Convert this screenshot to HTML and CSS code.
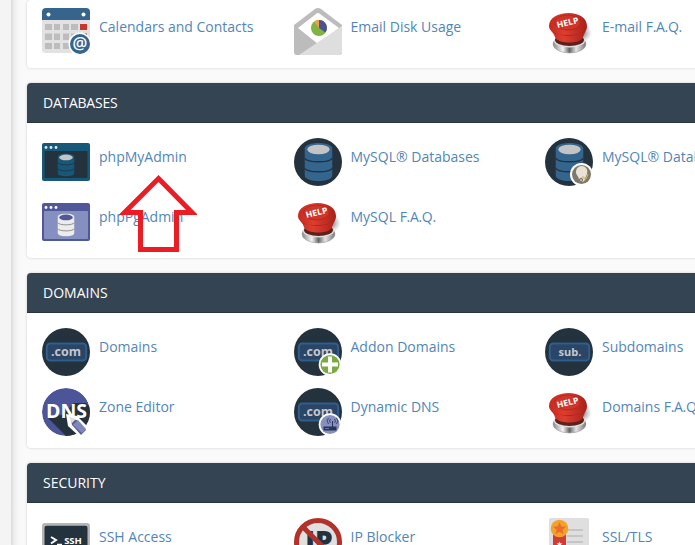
FILE: index.html
```html
<!DOCTYPE html>
<html lang="en">
<head>
<meta charset="utf-8">
<title>Control panel</title>
<link rel="stylesheet" href="styles.css">
</head>
<body>
<svg class="defs" aria-hidden="true">
  <defs>
    <linearGradient id="red" x1="0" x2="1"><stop offset="0" stop-color="#c52a1e"/><stop offset=".4" stop-color="#dd3e30"/><stop offset="1" stop-color="#a9201a"/></linearGradient>
    <linearGradient id="metal" x1="0" x2="1"><stop offset="0" stop-color="#888"/><stop offset=".3" stop-color="#f4f4f4"/><stop offset=".5" stop-color="#666"/><stop offset=".7" stop-color="#e5e5e5"/><stop offset="1" stop-color="#777"/></linearGradient>
    <radialGradient id="shade"><stop offset=".4" stop-color="#777" stop-opacity=".7"/><stop offset="1" stop-color="#aaa" stop-opacity="0"/></radialGradient>
    <clipPath id="disc"><circle cx="24" cy="24" r="24"/></clipPath>
    <symbol id="help" viewBox="0 0 48 48">
      <ellipse cx="35" cy="25" rx="12" ry="10" fill="url(#shade)"/>
      <ellipse cx="24.500" cy="36" rx="16.500" ry="9" fill="url(#metal)" stroke="#999" stroke-width=".6"/>
      <ellipse cx="24.500" cy="33" rx="15.500" ry="6.500" fill="#dedede"/>
      <ellipse cx="24.500" cy="32" rx="14.500" ry="6" fill="#5b211c"/>
      <path d="M4 18C4 10 13 5 23.500 5S42 10 42 18C42 22.500 39.500 24 38.500 28C37.500 32.500 32 34.500 24.500 34.500S10.500 32.500 9.500 28C8.500 24 4 22.500 4 18Z" fill="url(#red)"/>
      <path d="M5 21C9 29.500 37 30.500 41 21C38 25.500 34 27 23 27S8 26 5 21Z" fill="#a92219"/>
      <ellipse cx="22.500" cy="14.500" rx="12.800" ry="7.500" fill="#cf3529" stroke="#b5281f"/>
      <text x="22.500" y="17.500" class="t-help" textLength="22" lengthAdjust="spacingAndGlyphs" transform="rotate(-13 22.500 14)">HELP</text>
    </symbol>
    <symbol id="db" viewBox="0 0 28 38">
      <path d="M0 6C0 -2 28 -2 28 6V32C28 40 0 40 0 32Z" fill="currentColor"/>
      <path d="M0 15C3 20 25 20 28 15M0 25C3 30 25 30 28 25" fill="none" stroke="var(--line)" stroke-width="1.300"/>
      <ellipse cx="14" cy="6.500" rx="11.200" ry="4.800" fill="var(--top)"/>
    </symbol>
    <symbol id="mysql" viewBox="0 0 48 48">
      <circle cx="24" cy="24" r="24" fill="#24323e"/>
      <use href="#db" x="10.500" y="5" width="28" height="38" class="db-blue"/>
    </symbol>
    <symbol id="plate" viewBox="0 0 48 48">
      <circle cx="24" cy="24" r="24" fill="#24323e"/>
      <rect x="4.800" y="15.500" width="39.400" height="17" rx="3.500" fill="#2b4566" stroke="#2f5f8c" stroke-width="2"/>
    </symbol>
  </defs>
</svg>
<div class="layout">
  <aside class="rail"></aside>
  <main class="content">
    <section class="panel panel-cut">
      <div class="items">
        <a class="item"><svg class="icon" viewBox="0 0 48 48">
          <path d="M0 10H48V41a4 4 0 0 1-4 4H4a4 4 0 0 1-4-4Z" fill="#e2e2e2"/>
          <path d="M0 12V4a4 4 0 0 1 4-4H44a4 4 0 0 1 4 4V12Z" fill="#36648d"/>
          <circle cx="6.500" cy="6.500" r="2" fill="#fff"/><circle cx="41.500" cy="6.500" r="2" fill="#fff"/>
          <path d="M3 16h7v6H3zM12 16h6v6h-6zM21 16h6v6h-6zM29 16h7v6h-7zM3 25.500h7v6.500H3zM12 25.500h6v6.500h-6zM21 25.500h6v6.500h-6zM29 25.500h7v6.500h-7zM3 35h7v6H3zM12 35h6v6h-6zM21 35h6v6h-6z" fill="#bdbdbd"/>
          <path d="M38 16h7v6h-7zM38 25.500h7v6h-7z" fill="#c7372d"/>
          <circle cx="38" cy="36" r="11.500" fill="#fff"/><circle cx="38" cy="36" r="10" fill="#36648d"/>
          <text x="38" y="40.500" class="t-at">@</text></svg><span>Calendars and Contacts</span></a>
        <a class="item"><svg class="icon" viewBox="0 0 48 48">
          <path d="M0 17L21 1Q24-1 27 1L48 17V44a3 3 0 0 1-3 3H3a3 3 0 0 1-3-3Z" fill="#bcbcbc"/>
          <path d="M4 20L22 6Q24 4 26 6L45 20L24 36Z" fill="#fff"/>
          <path d="M48 18V44a3 3 0 0 1-3 3H5Z" fill="#dedede"/>
          <circle cx="25" cy="20" r="8" fill="#80b341"/><path d="M25 20V12a8 8 0 0 1 6.500 12.500Z" fill="#4e5292"/><path d="M25 20L20 13.800A8 8 0 0 1 25 12Z" fill="#eba04a"/></svg><span>Email Disk Usage</span></a>
        <a class="item"><svg class="icon"><use href="#help"/></svg><span>E-mail <b class="tight">F.A.Q.</b></span></a>
      </div>
    </section>

    <section class="panel">
      <h2 class="panel-head"><span class="narrow">DATABASES</span></h2>
      <div class="items">
        <a class="item"><svg class="icon" viewBox="0 0 48 48">
          <rect y="5" width="48" height="38" rx="2" fill="#175878"/><rect x="2.500" y="13" width="43" height="27" rx="1" fill="#24323e"/>
          <circle cx="4" cy="9.500" r="1.400" fill="#dceaf0"/><circle cx="9" cy="9.500" r="1.400" fill="#dceaf0"/><circle cx="14" cy="9.500" r="1.400" fill="#dceaf0"/>
          <use href="#db" x="15.500" y="15.500" width="17" height="23" class="db-teal"/></svg><span>phpMyAdmin</span></a>
        <a class="item"><svg class="icon"><use href="#mysql"/></svg><span>MySQL® Databases</span></a>
        <a class="item"><svg class="icon" viewBox="0 0 48 48"><use href="#mysql"/>
          <circle cx="36.500" cy="36.500" r="11.500" fill="#fff"/><circle cx="36.500" cy="36.500" r="9.500" fill="#80786a"/>
          <path d="M31 35a5.800 5.800 0 1 1 11 1c-1 3-2 3-2 6-2 3-6 2-6 0 0-3-2-4-3-7" fill="#e9e3d7"/><path d="M34 41h3v-2h2v2h2l2-5" fill="none" stroke="#d0b775"/><circle cx="36" cy="42" r="1.500" fill="none" stroke="#6f6759"/></svg><span>MySQL® Database Wizard</span></a>
        <a class="item"><svg class="icon" viewBox="0 0 48 48">
          <rect y="5" width="48" height="38" rx="2" fill="#50589a"/><rect x="2" y="13" width="44" height="28" rx="1" fill="#8590c0"/>
          <circle cx="4" cy="9.500" r="1.400" fill="#fff"/><circle cx="9" cy="9.500" r="1.400" fill="#fff"/><circle cx="14" cy="9.500" r="1.400" fill="#fff"/>
          <use href="#db" x="15.500" y="15.500" width="17" height="23" class="db-white"/></svg><span>phpPgAdmin</span>
          <svg class="pointer" viewBox="0 0 78 78"><path d="M39.500 4.500L73 38.500H57.500V75.500H21.500V38.500H5.500Z" fill="none" stroke="#ec1c24" stroke-width="5"/></svg></a>
        <a class="item"><svg class="icon"><use href="#help"/></svg><span>MySQL <b class="tight">F.A.Q.</b></span></a>
      </div>
    </section>

    <section class="panel">
      <h2 class="panel-head">DOMAINS</h2>
      <div class="items">
        <a class="item"><svg class="icon" viewBox="0 0 48 48"><use href="#plate"/><text x="24" y="28" class="t-com">.com</text></svg><span>Domains</span></a>
        <a class="item"><svg class="icon" viewBox="0 0 48 48"><use href="#plate"/><text x="24" y="28" class="t-com">.com</text>
          <circle cx="36" cy="36.500" r="11.300" fill="#fff"/><circle cx="36" cy="36.500" r="9.600" fill="#79aa43"/><path d="M36 28.500v16M28 36.500h16" stroke="#fff" stroke-width="4"/></svg><span>Addon Domains</span></a>
        <a class="item"><svg class="icon" viewBox="0 0 48 48"><use href="#plate"/><text x="25" y="28" class="t-sub">sub.</text></svg><span>Subdomains</span></a>
        <a class="item"><svg class="icon" viewBox="0 0 48 48"><g clip-path="url(#disc)"><circle cx="24" cy="24" r="24" fill="#4c5598"/><path d="M5 29L24 48H48V19L44 15L32 15L20 27Z" fill="#24323e"/></g>
          <text x="24.500" y="29.500" class="t-dns">DNS</text>
          <path d="M24 26L35 28L48 41L41 48H37L26 38Z" fill="#fff"/><path d="M29 31L35 32L44 42L39 47L30 37Z" fill="#596098"/><path d="M31 37L36 32L44 41L40 45Z" fill="#8087bb"/><path d="M27 29L34 31L30 35Z" fill="#ddd"/></svg><span>Zone Editor</span></a>
        <a class="item"><svg class="icon" viewBox="0 0 48 48"><use href="#plate"/><text x="24" y="28" class="t-com">.com</text>
          <circle cx="36" cy="36.500" r="11.300" fill="#fff"/><circle cx="36" cy="36.500" r="9.600" fill="#8890bf"/>
          <path d="M29.500 38.500h13v4h-13zM38 33h1v6h-1z" fill="#24345a"/><path d="M36.500 35q-2-2 0-4M34.500 36q-3-3 0-6M40.500 35q2-2 0-4M42.500 36q3-3 0-6" fill="none" stroke="#24345a" stroke-width=".8"/><path d="M31.500 40.500h1m1 0h1" stroke="#b7bddd"/></svg><span>Dynamic DNS</span></a>
        <a class="item"><svg class="icon"><use href="#help"/></svg><span>Domains <b class="tight">F.A.Q.</b></span></a>
      </div>
    </section>

    <section class="panel">
      <h2 class="panel-head">SECURITY</h2>
      <div class="items">
        <a class="item"><svg class="icon" viewBox="0 0 48 48"><rect y="5" width="48" height="38" rx="3" fill="#b5b5b5"/><rect x="2.500" y="7.800" width="43" height="33" rx="2" fill="#24323e"/>
          <path d="M9 19L14 22L9 25.500" fill="none" stroke="#fff" stroke-width="2"/><path d="M15 26.500H20" stroke="#fff" stroke-width="1.500"/><text x="31" y="25.500" class="t-ssh">SSH</text></svg><span>SSH Access</span></a>
        <a class="item"><svg class="icon" viewBox="0 0 48 48"><circle cx="24" cy="24" r="21.500" fill="#e0e0e0"/><text x="25" y="33" class="t-ip">IP</text><circle cx="24" cy="24" r="21.500" fill="none" stroke="#b2322b" stroke-width="5"/><path d="M9 9L39 39" stroke="#b2322b" stroke-width="5"/></svg><span>IP Blocker</span></a>
        <a class="item"><svg class="icon" viewBox="0 0 48 48"><rect x="4" width="40" height="48" rx="1.500" fill="#dfdfdf"/><path d="M19 12H38M22 18H38M22 24H38" stroke="#bdbdbd" stroke-width="1.600"/>
          <path d="M8 15H21V34L14.500 29L8 34Z" fill="#d33b36"/><circle cx="14.500" cy="10.500" r="8.800" fill="#f2a32d"/><path d="M14.500 4L16.300 8.300L21 8.700L17.400 11.700L18.500 16.200L14.500 13.700L10.500 16.200L11.600 11.700L8 8.700L12.700 8.300Z" fill="#ee6c27"/><path d="M14.500 23.500l.8 1.700 2 .2-1.500 1.300.4 2-1.700-1-1.700 1 .4-2-1.500-1.300 2-.2z" fill="#fff"/></svg><span>SSL/TLS</span></a>
      </div>
    </section>
  </main>
</div>
</body>
</html>
```
FILE: styles.css
```css
* { box-sizing: border-box; }
body { margin: 0; height: 545px; overflow: hidden; background: #fafafa; font: 14px/20px "Open Sans", sans-serif; }
.defs { position: absolute; width: 0; height: 0; }
.layout { display: flex; height: 545px; overflow: hidden; }
.rail { flex: 0 0 11px; background: #f4f4f4; }
.content { flex: none; width: 798px; padding-left: 16px; background: linear-gradient(90deg, #dadada, #ededed 3px, #f7f7f7 7px, #fafafa 12px); }
.panel { margin-bottom: 15px; background: #fff; border-radius: 4px; box-shadow: 0 0 2px 1px #e4e4e4; }
.panel-head { height: 40px; margin: 0; padding: 10px 16px; border-bottom: 1px solid #28353f; border-radius: 4px 4px 0 0; background: #354453; color: #fff; font-size: 14px; font-weight: 400; line-height: 20px; }
.narrow { letter-spacing: -.25px; }
.tight { font-weight: 400; letter-spacing: -.3px; }
.items { display: grid; grid-template-columns: repeat(3, 251.5px); grid-auto-rows: 60px; padding: 15px 0 0 15px; }
.panel-cut .items { padding-top: 8px; }
.item { position: relative; display: flex; gap: 9px; color: #5286b7; white-space: nowrap; }
.item span { padding-top: 9px; }
.icon { flex: none; display: block; width: 48px; height: 48px; }
.pointer { position: absolute; left: 77px; top: -24px; width: 78px; height: 78px; }
.db-blue { color: #34658f; --line: #24323e; --top: #c4c4c4; }
.db-teal { color: #175878; --line: #24323e; --top: #c4c4c4; }
.db-white { color: #ececec; --line: #777; --top: #50589a; }
.icon text, symbol text { font-family: "Open Sans", sans-serif; font-weight: 700; text-anchor: middle; fill: #fff; }
.icon .t-at { font-size: 16.5px; font-weight: 600; }
symbol .t-help { font-size: 8.5px; }
.icon .t-com { font-size: 12.5px; fill: #c4c8cc; }
.icon .t-sub { font-size: 11px; fill: #c4c8cc; }
.icon .t-dns { font-size: 19.5px; }
.icon .t-ssh { font-size: 9.5px; }
.icon .t-ip { font-size: 28px; font-weight: 800; fill: #24323e; }
```
